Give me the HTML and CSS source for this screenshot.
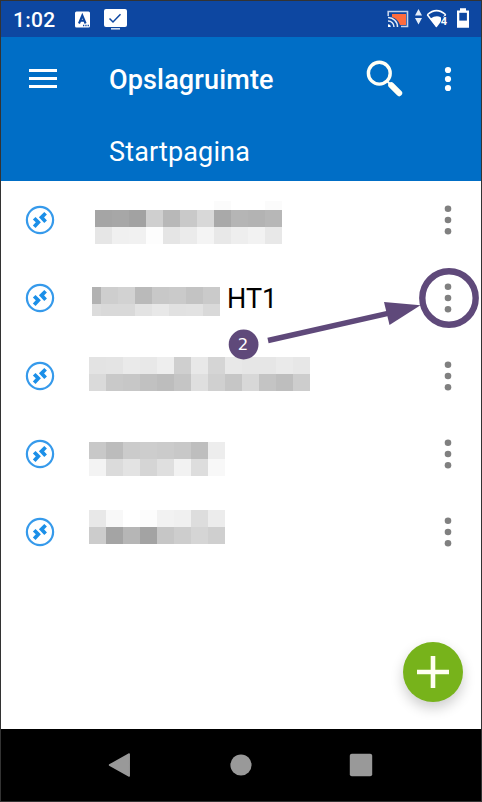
FILE: index.html
```html
<!DOCTYPE html>
<html lang="nl">
<head>
<meta charset="utf-8">
<title>Opslagruimte</title>
<link rel="stylesheet" href="styles.css">
</head>
<body>
<div class="phone">
  <header class="status">
    <span class="clock">1:02</span>
    <svg class="status-left" width="60" height="36" viewBox="70 1 60 36">
      <rect x="75" y="11.5" width="15" height="16" rx="1.5" fill="#fff"/>
      <path d="M79 23.5L82.3 15.5L85.600 23.5M80.200 20.800H84.400" fill="none" stroke="#0d47a1" stroke-width="2.100"/>
      <path d="M83 25.500h1.300M85.300 25.500h1.300M87.600 25.500h1.300" stroke="#0d47a1" stroke-width="1.300"/>
      <rect x="104" y="9" width="23" height="18" rx="2" fill="#fff"/>
      <path d="M111 28.800h9" stroke="#cfdcf0" stroke-width="1.600"/>
      <path d="M109.500 18.500l3.500 3.500 7.500-7.800" fill="none" stroke="#0d47a1" stroke-width="1.500"/>
    </svg>
    <svg class="status-right" width="90" height="36" viewBox="384 1 90 36">
      <path d="M392 14h14v11h-6a12 12 0 0 0-8-8z" fill="#ff6b3d"/>
      <path d="M388.200 16v-4.500h19.300v15h-6.500" fill="none" stroke="#c5d3ea" stroke-width="1.600"/>
      <path d="M388 17.500a9.300 9.300 0 0 1 9.500 9.500M388 21a5.800 5.800 0 0 1 6 6" fill="none" stroke="#e2eaf6" stroke-width="1.500"/>
      <path d="M388 27v-2.700a2.700 2.700 0 0 1 2.700 2.700z" fill="#fff"/>
      <path d="M415 15.500l3.500-6.500L422 15.500zM415 18h7l-3.500 6.500z" fill="#e5edf8"/>
      <path d="M427.300 14.800Q436.500 6.500 445.800 14.800M427.300 14.800L436.500 26.500" fill="none" stroke="#fff" stroke-width="1.500"/>
      <path d="M430.500 18.500Q436.500 14.500 441 17.500V21.500L436.500 27.500z" fill="#fff"/>
      <path d="M445.600 14.800l-2 2.300" stroke="#fff" stroke-width="1.300"/>
      <text x="440.700" y="25" class="net" paint-order="stroke">4</text>
      <path d="M460 8.200h6v2.300h3V27.800H457V10.500h3z" fill="#fff"/>
      <rect x="459.300" y="12.800" width="7.600" height="7.800" fill="#0d47a1"/>
    </svg>
  </header>
  <section class="bar">
    <div class="bar-main">
      <svg class="burger" width="28" height="20" viewBox="0 0 28 20"><path d="M0 1.500h28M0 9.500h28M0 17.500h28" stroke="#fff" stroke-width="3"/></svg>
      <h1>Opslagruimte</h1>
      <svg class="search" width="38" height="38" viewBox="366 60 38 38">
        <circle cx="379.300" cy="73.200" r="10.900" fill="none" stroke="#fffff5" stroke-width="3.400"/>
        <path d="M387 81l3 3" stroke="#fffff5" stroke-width="2"/>
        <path d="M391.200 85.200l8 8" stroke="#fffff5" stroke-width="6" stroke-linecap="round"/>
      </svg>
      <svg class="more" width="8" height="32" viewBox="0 0 8 32" fill="#fff"><circle cx="4" cy="7" r="3.100"/><circle cx="4" cy="16" r="3.100"/><circle cx="4" cy="25" r="3.100"/></svg>
    </div>
    <div class="crumb">Startpagina</div>
  </section>
  <svg class="defs" width="0" height="0">
    <symbol id="remote" viewBox="0 0 30 30">
      <circle cx="15" cy="15" r="13.100" fill="none" stroke="#369aeb" stroke-width="2.200"/>
      <path d="M9.200 13.200L13.300 17.300L9.200 21.700M20.600 8.300L16.500 12.400L20.600 16.700" fill="none" stroke="#1b8fe8" stroke-width="3.700"/>
    </symbol>
    <symbol id="dots" viewBox="0 0 8 32">
      <circle cx="4" cy="4.800" r="3.300"/><circle cx="4" cy="16" r="3.300"/><circle cx="4" cy="27.200" r="3.300"/>
    </symbol>
  </svg>
  <main class="list">
    <div class="row">
      <svg class="remote"><use href="#remote"/></svg>
      <svg class="mosaic" width="193" height="78" data-x="6" data-bands="20,9,-,-,-,-,-,-,-,fb,-,-,fb|29,17,a5,a7,a2,cf,b8,c9,d8,a9,b5,b3,b7|46,17,e6,f0,f1,fd,e5,eb,f4,e8,ee,f2,e8"></svg>
      <svg class="dots"><use href="#dots"/></svg>
    </div>
    <div class="row">
      <svg class="remote"><use href="#remote"/></svg>
      <svg class="mosaic" width="131" height="78" data-x="3" data-first="9" data-bands="28,17,b2,ce,d2,ba,c8,ca,c3,ca|45,12,dc,d9,d9,e3,e8,e1,e2,d9"></svg>
      <span class="name">HT1</span>
      <svg class="dots"><use href="#dots"/></svg>
    </div>
    <div class="row">
      <svg class="remote"><use href="#remote"/></svg>
      <svg class="mosaic" width="221" height="78" data-x="0" data-bands="20,17,e3,e4,ea,e8,ee,cf,e8,d5,e8,e6,e6,ea,e7|37,17,da,c9,c7,c1,bd,c5,df,d0,c6,d8,c4,be,cd"></svg>
      <svg class="dots"><use href="#dots"/></svg>
    </div>
    <div class="row">
      <svg class="remote"><use href="#remote"/></svg>
      <svg class="mosaic" width="136" height="78" data-x="0" data-bands="27,17,c8,bc,cb,cd,cb,c8,be,ed|44,17,f3,db,e3,d5,df,f2,dd,f8"></svg>
      <svg class="dots"><use href="#dots"/></svg>
    </div>
    <div class="row">
      <svg class="remote"><use href="#remote"/></svg>
      <svg class="mosaic" width="136" height="78" data-x="0" data-bands="17,17,e8,f8,-,fc,f2,f0,dd,ec|34,17,cc,a4,b6,a3,c6,cd,d5,cf"></svg>
      <svg class="dots"><use href="#dots"/></svg>
    </div>
  </main>
  <nav class="nav">
    <svg width="24" height="26" viewBox="0 0 24 26"><path d="M21.200 2V24L1.500 13z" fill="#999" stroke="#999" stroke-width="1.500" stroke-linejoin="round"/></svg>
    <svg width="24" height="26" viewBox="0 0 24 26"><circle cx="12" cy="13" r="10.600" fill="#999"/></svg>
    <svg width="24" height="26" viewBox="0 0 24 26"><rect x=".8" y="1.800" width="22.400" height="22.400" rx="2" fill="#999"/></svg>
  </nav>
  <button class="fab" aria-label="Toevoegen"><svg width="32" height="32" viewBox="0 0 32 32"><path d="M0 16h32M16 0v32" stroke="#fffff0" stroke-width="4.600"/></svg></button>
  <svg class="callout" width="260" height="110" viewBox="222 260 260 110">
    <circle cx="449" cy="298" r="26.700" fill="none" stroke="#5f497a" stroke-width="6.400"/>
    <path d="M268 340.500L388 313.300" stroke="#5f497a" stroke-width="5.400"/>
    <path d="M384 302L420.500 305.300L389.500 325z" fill="#5f497a"/>
    <circle cx="243.600" cy="344.500" r="14.900" fill="#5f497a"/>
    <text x="243" y="350" class="step" text-anchor="middle">2</text>
  </svg>
</div>
<script src="mosaic.js"></script>
</body>
</html>
```
FILE: styles.css
```css
* { box-sizing: border-box; }
body { margin: 0; font-family: Roboto, "Liberation Sans", sans-serif; background: #fff; }
svg { display: block; flex: none; }
.phone { position: relative; display: flex; flex-direction: column; width: 482px; height: 802px; border: 1px solid #333; overflow: hidden; background: #fff; }
.status { display: flex; height: 36px; background: #0d47a1; color: #fff; }
.clock { width: 69px; padding-left: 12px; font-size: 21px; font-weight: 500; line-height: 39px; letter-spacing: .3px; }
.status-right { margin-left: auto; margin-right: 7px; }
.net { font-size: 11px; font-weight: 700; fill: #fff; stroke: #0d47a1; stroke-width: 1.500px; }
.bar { height: 144px; background: #006ec6; color: #fff; }
.bar-main { display: flex; align-items: center; height: 84px; padding: 0 29px 0 28px; }
.burger { margin-right: 52px; }
h1 { margin: 2px 0 0; font-size: 27px; font-weight: 500; line-height: 32px; letter-spacing: .15px; }
.search { margin-left: auto; margin-right: 40px; }
.crumb { padding-left: 108px; font-size: 27px; line-height: 32px; margin-top: 15px; letter-spacing: .15px; }
.defs { position: absolute; }
.list { flex: 1; }
.row { display: flex; align-items: center; height: 78px; padding: 0 29px 0 24px; }
.remote { width: 30px; height: 30px; margin-right: 34px; }
.dots { width: 8px; height: 32px; margin-left: auto; fill: #808080; }
.name { margin: 2px 0 0 7px; font-size: 27px; line-height: 32px; color: #000; }
.mosaic { shape-rendering: crispEdges; }
.nav { display: flex; justify-content: space-between; align-items: center; height: 72px; padding: 0 108px 0 107px; background: #000; }
.fab { position: absolute; right: 18px; bottom: 99px; display: flex; align-items: center; justify-content: center; width: 60px; height: 60px; padding: 0; border: 0; border-radius: 50%; background: #77b31b; box-shadow: 0 6px 13px rgba(0,0,0,.2); }
.callout { position: absolute; left: 221px; top: 259px; }
.step { font: 16.500px "DejaVu Sans", sans-serif; fill: #fff; }
```
FILE: mosaic.js
```js
// Each band is "top,height,shade,shade,..."; a dash leaves the cell empty.
document.querySelectorAll('.mosaic').forEach(function (svg) {
  svg.dataset.bands.split('|').forEach(function (band) {
    var parts = band.split(',');
    var x = Number(svg.dataset.x);
    parts.slice(2).forEach(function (shade, i) {
      var width = i === 0 && svg.dataset.first ? Number(svg.dataset.first) : 17;
      if (shade !== '-') {
        var cell = document.createElementNS('http://www.w3.org/2000/svg', 'rect');
        cell.setAttribute('x', x);
        cell.setAttribute('y', parts[0]);
        cell.setAttribute('width', width);
        cell.setAttribute('height', parts[1]);
        cell.setAttribute('fill', '#' + shade + shade + shade);
        svg.appendChild(cell);
      }
      x += width;
    });
  });
});
```
